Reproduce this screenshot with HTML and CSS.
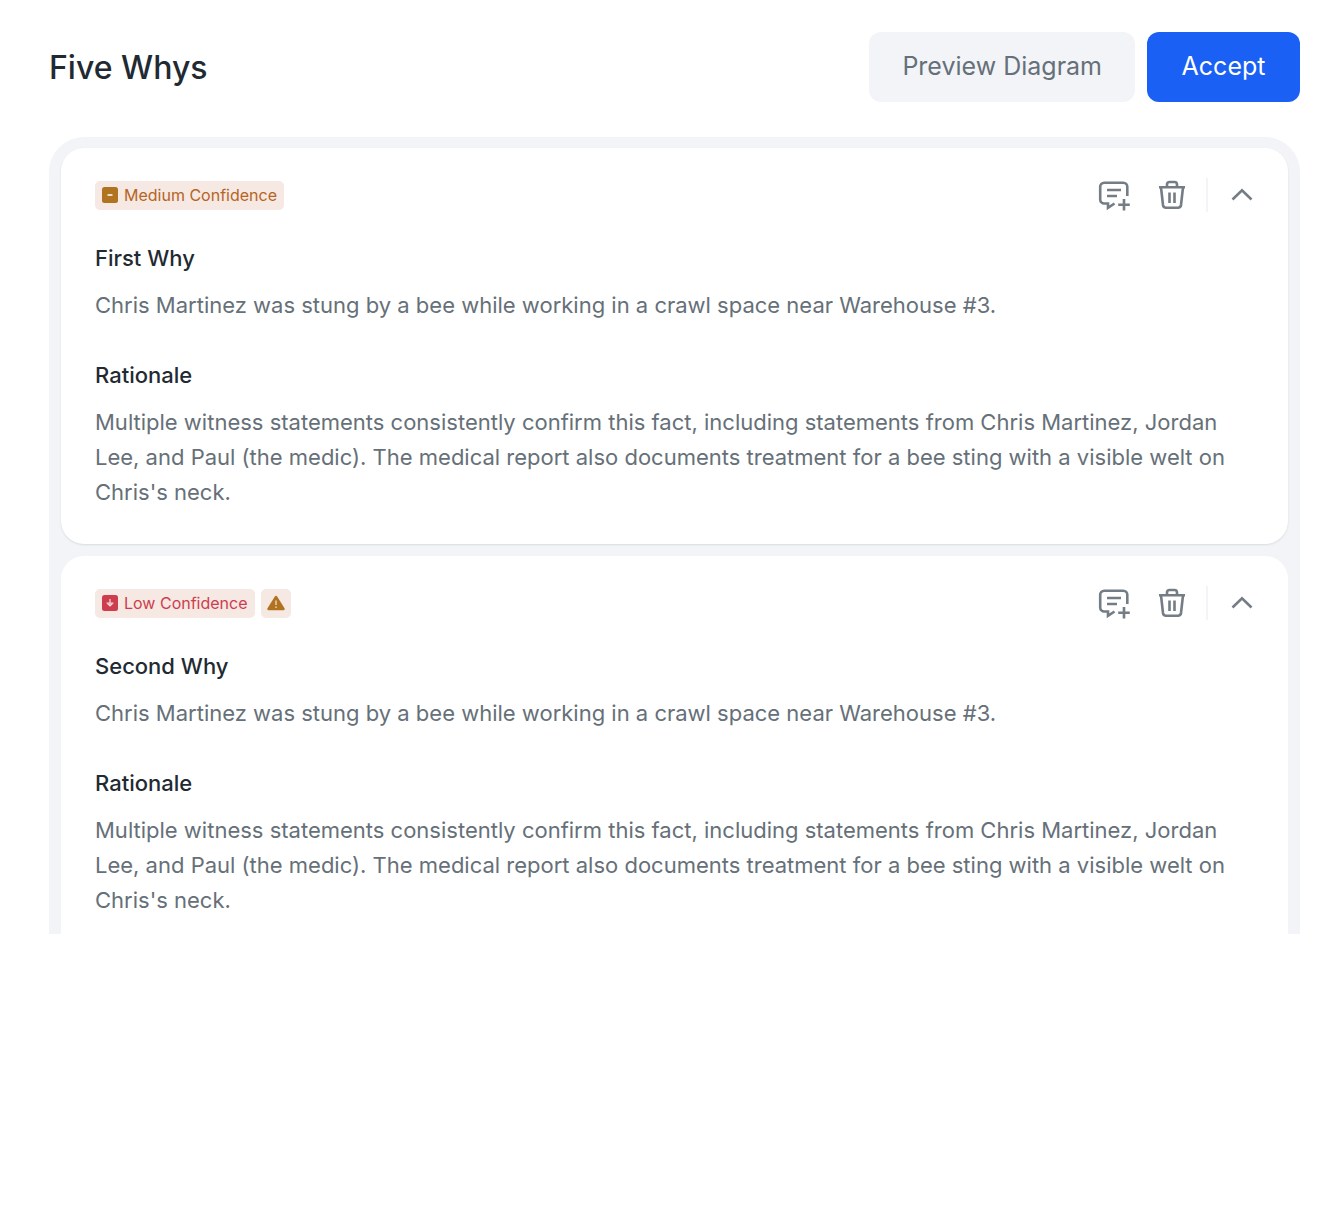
FILE: index.html
```
<!DOCTYPE html>
<html lang="en">
<head>
<meta charset="utf-8">
<meta name="viewport" content="width=device-width, initial-scale=1">
<title>Five Whys</title>
<link rel="stylesheet" href="styles.css">
</head>
<body>
<svg class="sprite" aria-hidden="true">
  <symbol id="icon-comment" viewBox="0 0 34 34">
    <path d="M30.300 18V8.700a4 4 0 0 0-4-4H7.200a4 4 0 0 0-4 4v12.800a4 4 0 0 0 4 4H11v4.300l6.500-4.300" />
    <path d="M10 12h14M10 18h10M27 21v11.500M21.200 26.700h11.600" />
  </symbol>
  <symbol id="icon-trash" viewBox="0 0 34 34">
    <path d="M4 9.300h26M6 9.300l2 17.700q.4 2.700 3 2.700h12q2.600 0 3-2.700L28 9.300M12 9.300V6.500q0-2.500 2.500-2.500h5q2.500 0 2.500 2.500v2.800M14.500 14.500v10.500M19.500 14.500v10.500" />
  </symbol>
  <symbol id="icon-chevron" viewBox="0 0 34 34">
    <path d="M7.500 21.500L17 12.300l9.500 9.200" />
  </symbol>
</svg>
<main class="page">
  <header class="page-header">
    <h1 class="page-title">Five Whys</h1>
    <div class="page-actions">
      <button class="button button-secondary" type="button">Preview Diagram</button>
      <button class="button button-primary" type="button">Accept</button>
    </div>
  </header>
  <div class="why-list">
    <article class="card">
      <div class="card-header">
        <div class="badges">
          <span class="badge badge-medium">
            <svg class="badge-icon" viewBox="0 0 16 16" aria-hidden="true"><rect width="16" height="16" rx="2.500" fill="currentColor"/><path d="M5.500 8h5" stroke="#fff" stroke-width="1.500"/></svg>
            Medium Confidence
          </span>
        </div>
        <div class="card-actions">
          <button class="icon-button" type="button" aria-label="Add comment"><svg class="icon"><use href="#icon-comment"/></svg></button>
          <button class="icon-button" type="button" aria-label="Delete"><svg class="icon"><use href="#icon-trash"/></svg></button>
          <button class="icon-button icon-button-divided" type="button" aria-label="Collapse"><svg class="icon"><use href="#icon-chevron"/></svg></button>
        </div>
      </div>
      <section class="entry">
        <h2 class="entry-title">First Why</h2>
        <p class="entry-text">Chris Martinez was stung by a bee while working in a crawl space near Warehouse #3.</p>
      </section>
      <section class="entry">
        <h2 class="entry-title">Rationale</h2>
        <p class="entry-text">Multiple witness statements consistently confirm this fact, including statements from Chris Martinez, Jordan Lee, and Paul (the medic). The medical report also documents treatment for a bee sting with a visible welt on Chris's neck.</p>
      </section>
    </article>
    <article class="card card-continued">
      <div class="card-header">
        <div class="badges">
          <span class="badge badge-low">
            <svg class="badge-icon" viewBox="0 0 16 16" aria-hidden="true"><rect width="16" height="16" rx="2.500" fill="currentColor"/><path d="M8 4v7.500M4.500 8h7M5.500 8.500L8 11l2.500-2.500" fill="none" stroke="#fff" stroke-opacity=".8" stroke-width="1.200"/></svg>
            Low Confidence
          </span>
          <span class="badge badge-warning" role="img" aria-label="Warning">
            <svg class="warning-icon" viewBox="0 0 18 16" aria-hidden="true"><path d="M9 2L16.500 14H1.500Z" fill="currentColor" stroke="currentColor" stroke-width="2.400" stroke-linejoin="round"/><path d="M9 5.500v4.500M9 11.500v1.500" stroke="#f6e8e3" stroke-width="1.200"/></svg>
          </span>
        </div>
        <div class="card-actions">
          <button class="icon-button" type="button" aria-label="Add comment"><svg class="icon"><use href="#icon-comment"/></svg></button>
          <button class="icon-button" type="button" aria-label="Delete"><svg class="icon"><use href="#icon-trash"/></svg></button>
          <button class="icon-button icon-button-divided" type="button" aria-label="Collapse"><svg class="icon"><use href="#icon-chevron"/></svg></button>
        </div>
      </div>
      <section class="entry">
        <h2 class="entry-title">Second Why</h2>
        <p class="entry-text">Chris Martinez was stung by a bee while working in a crawl space near Warehouse #3.</p>
      </section>
      <section class="entry">
        <h2 class="entry-title">Rationale</h2>
        <p class="entry-text">Multiple witness statements consistently confirm this fact, including statements from Chris Martinez, Jordan Lee, and Paul (the medic). The medical report also documents treatment for a bee sting with a visible welt on Chris's neck.</p>
      </section>
    </article>
  </div>
</main>
</body>
</html>
```
FILE: styles.css
```
* {
  box-sizing: border-box;
}

body {
  margin: 0;
  background: #fff;
  color: #1f2a33;
  font-family: Inter, "Liberation Sans", sans-serif;
  font-size: 22px;
  line-height: 35px;
}

h1, h2, p {
  margin: 0;
}

button {
  border: 0;
  font: inherit;
  cursor: pointer;
}

.sprite {
  display: none;
}

.page {
  padding: 32px 44px 32px 49px;
}

.page-header {
  display: flex;
  align-items: center;
  justify-content: space-between;
  margin-bottom: 35px;
}

.page-title {
  font-size: 32px;
  font-weight: 500;
}

.page-actions {
  display: flex;
  gap: 12px;
}

.button {
  min-width: 153px;
  padding: 17px 33px 18px;
  border-radius: 12px;
  font-size: 25px;
}

.button-secondary {
  background: #f3f4f8;
  color: #667078;
}

.button-primary {
  background: #1a60f5;
  color: #fff;
}

.why-list {
  display: flex;
  flex-direction: column;
  gap: 12px;
  padding: 11px 12px 0;
  border-radius: 35px 35px 0 0;
  background: #f3f4f8;
}

.card {
  padding: 30px 35px 34px 34px;
  border-radius: 23px;
  background: #fff;
  box-shadow: 0 1px 2px rgba(31, 42, 51, 0.12);
}

.card-continued {
  padding-bottom: 16px;
  border-radius: 23px 23px 0 0;
  box-shadow: none;
}

.card-header {
  display: flex;
  align-items: center;
  justify-content: space-between;
  margin-bottom: 29px;
}

.badges {
  display: flex;
  gap: 6px;
}

.badge {
  display: flex;
  align-items: center;
  gap: 6px;
  height: 29px;
  padding: 0 7px;
  border-radius: 5px;
  background: #f6e8e3;
  font-size: 16px;
}

.badge-medium {
  color: #b5651f;
}

.badge-medium .badge-icon,
.badge-warning {
  color: #b07320;
}

.badge-warning {
  padding: 0 6px;
}

.badge-low {
  color: #ce3d4e;
}

.badge-icon {
  width: 16px;
  height: 16px;
}

.warning-icon {
  width: 18px;
  height: 16px;
}

.card-actions {
  display: flex;
  align-items: center;
  gap: 24px;
  margin-right: -6px;
}

.icon-button {
  display: flex;
  padding: 0;
  background: none;
  color: #747d85;
}

.icon-button-divided {
  margin-left: -7px;
  padding-left: 17px;
  border-left: 2px solid #f3f4f8;
}

.icon {
  width: 34px;
  height: 34px;
  fill: none;
  stroke: currentColor;
  stroke-width: 2.600;
}

.entry + .entry {
  margin-top: 35px;
}

.entry-title {
  margin-bottom: 12px;
  font-size: 22px;
  font-weight: 500;
}

.entry-text {
  color: #667078;
}
```
